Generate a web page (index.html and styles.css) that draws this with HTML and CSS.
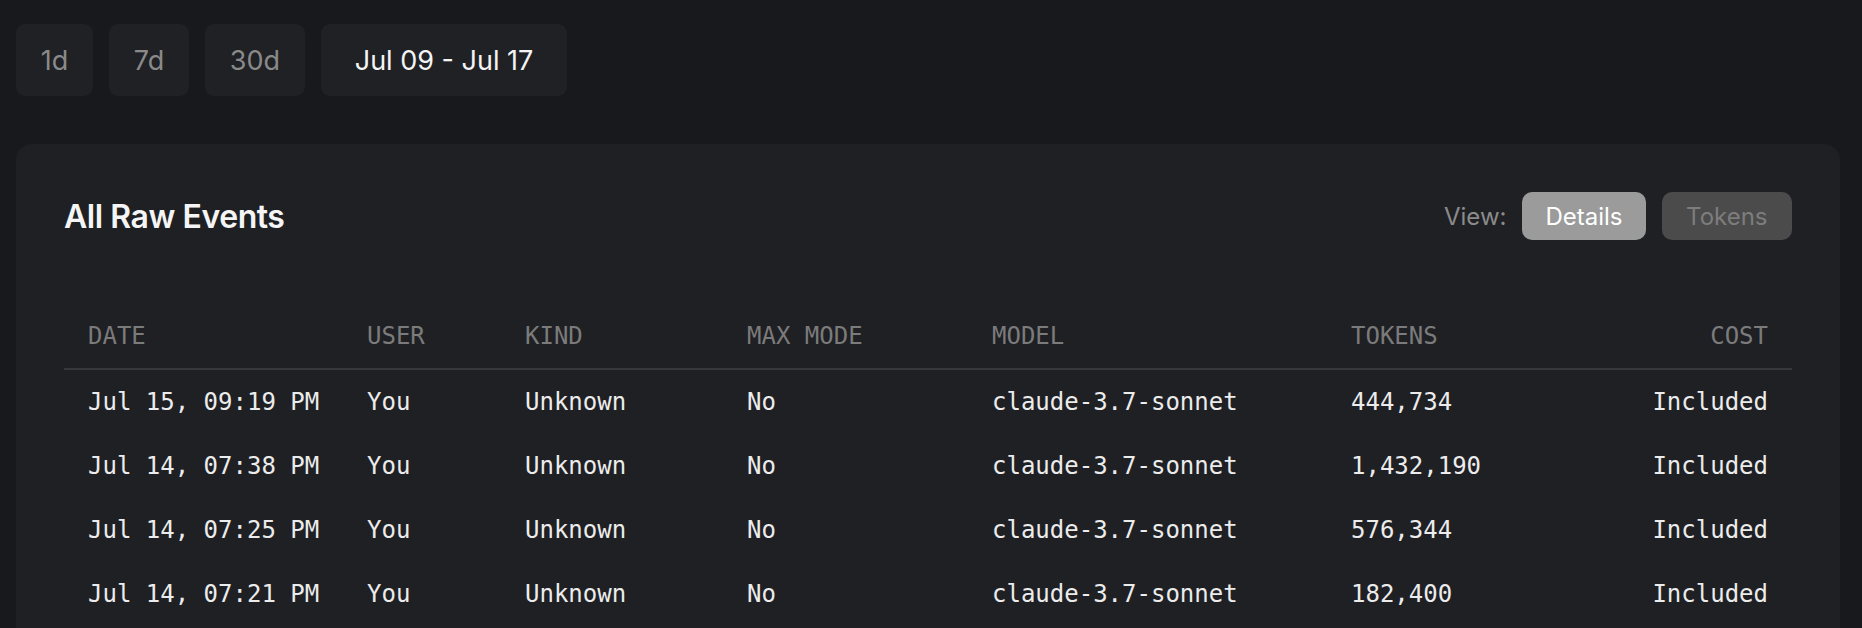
FILE: index.html
```html
<!DOCTYPE html>
<html>
<head>
<meta charset="utf-8">
<link rel="stylesheet" href="styles.css">
</head>
<body>
<div class="page">
  <div class="ranges">
    <button class="range">1d</button>
    <button class="range">7d</button>
    <button class="range">30d</button>
    <button class="range range-active">Jul 09 - Jul 17</button>
  </div>
  <section class="card">
    <div class="card-head">
      <h2 class="title">All Raw Events</h2>
      <div class="view">
        <span class="view-label">View:</span>
        <button class="toggle toggle-on">Details</button>
        <button class="toggle toggle-off">Tokens</button>
      </div>
    </div>
    <table class="events">
      <colgroup>
        <col class="c-date"><col class="c-user"><col class="c-kind"><col class="c-max"><col class="c-model"><col class="c-tokens"><col class="c-cost">
      </colgroup>
      <thead>
        <tr><th>Date</th><th>User</th><th>Kind</th><th>Max Mode</th><th>Model</th><th>Tokens</th><th class="right">Cost</th></tr>
      </thead>
      <tbody>
        <tr><td>Jul 15, 09:19 PM</td><td>You</td><td>Unknown</td><td>No</td><td>claude-3.7-sonnet</td><td>444,734</td><td class="right">Included</td></tr>
        <tr><td>Jul 14, 07:38 PM</td><td>You</td><td>Unknown</td><td>No</td><td>claude-3.7-sonnet</td><td>1,432,190</td><td class="right">Included</td></tr>
        <tr><td>Jul 14, 07:25 PM</td><td>You</td><td>Unknown</td><td>No</td><td>claude-3.7-sonnet</td><td>576,344</td><td class="right">Included</td></tr>
        <tr><td>Jul 14, 07:21 PM</td><td>You</td><td>Unknown</td><td>No</td><td>claude-3.7-sonnet</td><td>182,400</td><td class="right">Included</td></tr>
      </tbody>
    </table>
  </section>
</div>
</body>
</html>
```

FILE: styles.css
```css
html, body {
  margin: 0;
  padding: 0;
  background: #18191c;
}
body {
  font-family: Inter, "Noto Sans", sans-serif;
  color: #f2f2f2;
}
.page {
  padding: 24px 22px 0 16px;
}
.ranges {
  display: flex;
  gap: 16px;
}
.range {
  height: 72px;
  padding: 0 24.75px;
  border: none;
  border-radius: 9px;
  background: #202125;
  color: #8a8a8a;
  font-family: Inter, "Noto Sans", sans-serif;
  font-size: 27px;
  font-weight: 400;
}
.range-active {
  padding: 0 34px;
  color: #f4f4f4;
}
.card {
  margin-top: 48px;
  background: #1f2024;
  border-radius: 16px;
  padding: 48px;
}
.card-head {
  display: flex;
  align-items: center;
  justify-content: space-between;
  height: 48px;
}
.title {
  margin: 0;
  font-size: 32px;
  font-weight: 600;
  color: #f5f5f5;
  letter-spacing: -0.45px;
}
.view {
  display: flex;
  align-items: center;
  gap: 16px;
}
.view-label {
  font-size: 24px;
  color: #8b8b8b;
}
.toggle {
  height: 48px;
  padding: 0 23px;
  border: none;
  border-radius: 10px;
  font-family: Inter, "Noto Sans", sans-serif;
  font-size: 24px;
}
.toggle-on {
  background: #9b9b9b;
  color: #ffffff;
}
.toggle-off {
  padding: 0 24.5px;
  background: #4b4b4b;
  color: #7d7d7d;
}
.events {
  margin-top: 64px;
  width: 100%;
  border-collapse: collapse;
  table-layout: fixed;
  font-family: "DejaVu Sans Mono", "Liberation Mono", monospace;
  font-size: 24px;
}
.c-date { width: 279px; }
.c-user { width: 158px; }
.c-kind { width: 222px; }
.c-max { width: 245px; }
.c-model { width: 359px; }
.c-tokens { width: 233px; }
.events th {
  height: 64px;
  padding: 0 24px;
  text-align: left;
  text-transform: uppercase;
  font-weight: 400;
  color: #7b7b7b;
  border-bottom: 2px solid #36373a;
  white-space: nowrap;
}
.events td {
  height: 64px;
  padding: 0 24px;
  color: #ececec;
  white-space: nowrap;
}
.events .right {
  text-align: right;
}
```
